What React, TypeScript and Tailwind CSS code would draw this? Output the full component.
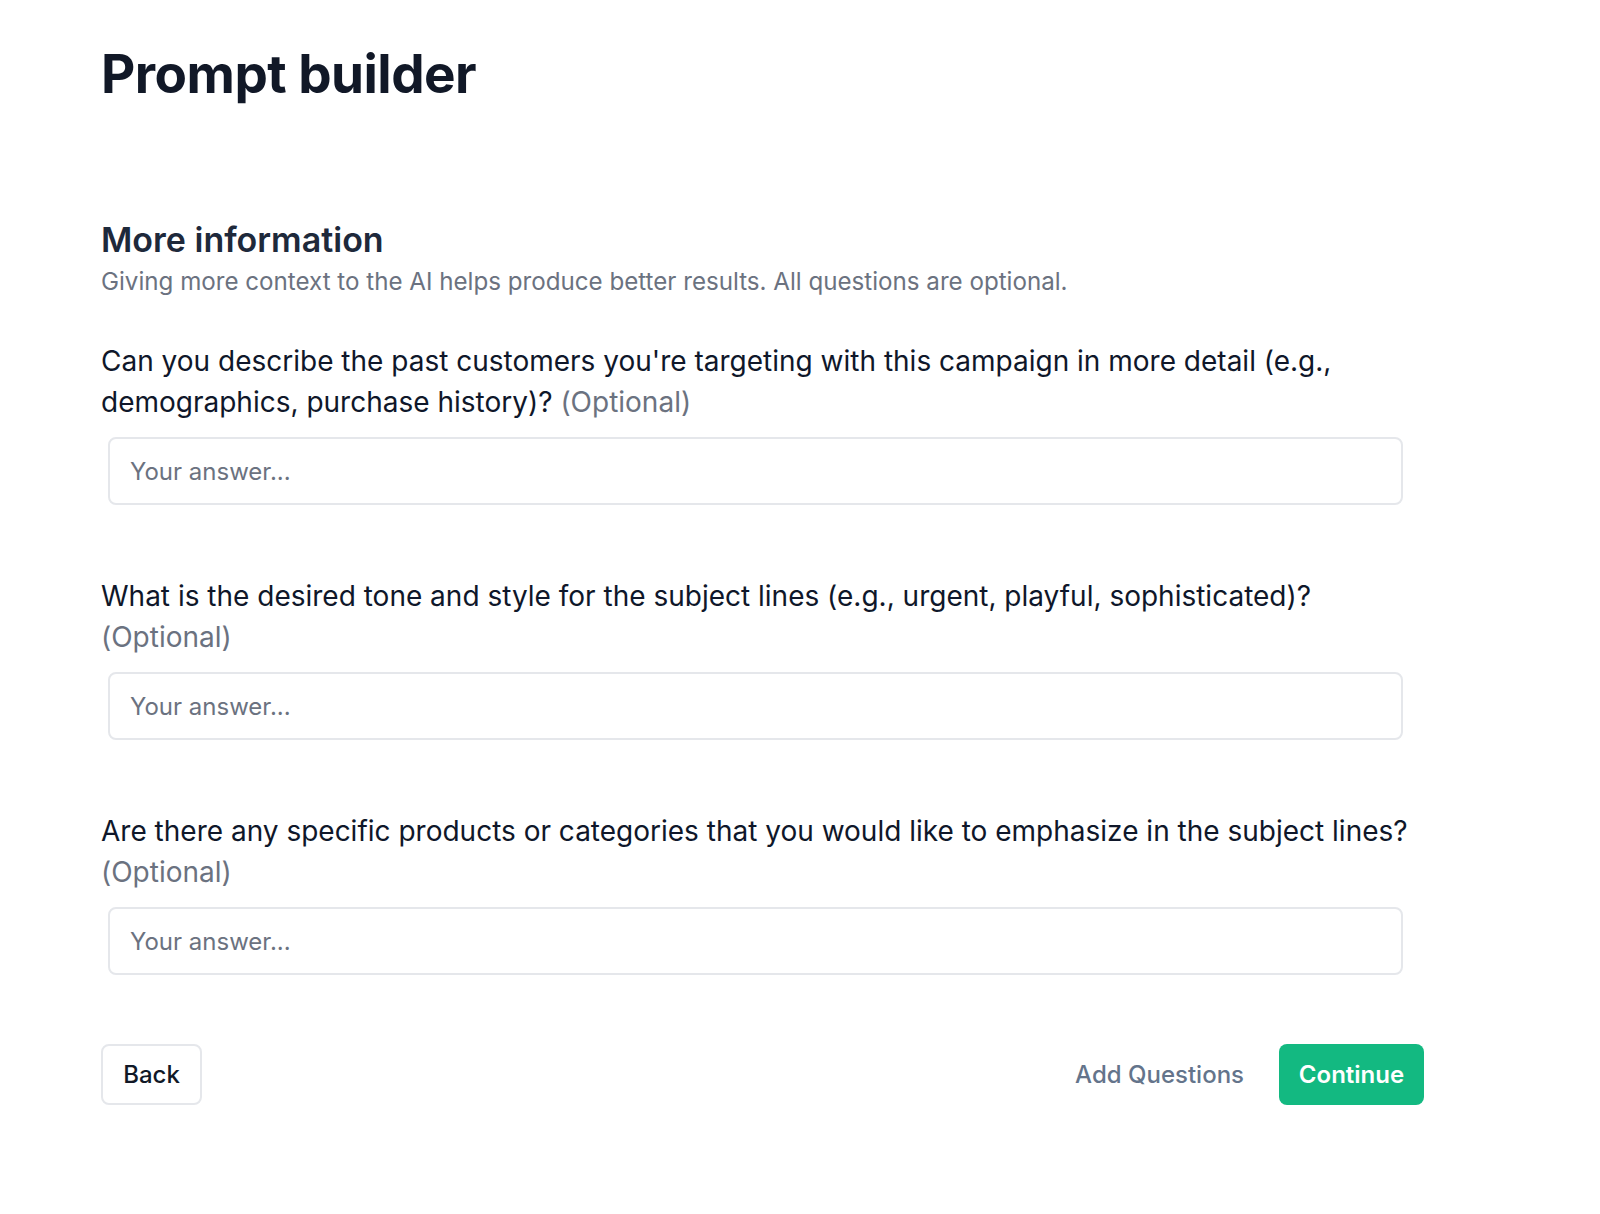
import { useState } from "react";

const questions = [
  "Can you describe the past customers you're targeting with this campaign in more detail (e.g., demographics, purchase history)?",
  "What is the desired tone and style for the subject lines (e.g., urgent, playful, sophisticated)?",
  "Are there any specific products or categories that you would like to emphasize in the subject lines?",
];

const App = () => {
  const [answers, setAnswers] = useState<string[]>(["", "", ""]);

  return (
    <div className="min-h-screen bg-white font-['Inter',sans-serif] antialiased">
      <div className="pl-[101px] pt-[38px] w-[1424px]">
        <h1 className="text-[53px] leading-[72px] font-bold text-[#111827] tracking-[-0.01em]">Prompt builder</h1>

        <div className="mt-[108px]">
          <h2 className="text-[34px] leading-[44px] font-semibold text-[#1e293b]">More information</h2>
          <p className="mt-[4px] text-[24.15px] leading-[32px] text-[#6b7280]">
            Giving more context to the AI helps produce better results. All questions are optional.
          </p>
        </div>

        <div className="mt-[43px] flex flex-col gap-[71px]">
          {questions.map((q, i) => (
            <div key={i}>
              <label className="block text-[28px] leading-[41px] text-[#0f172a]">
                {q} <span className="text-[#6b7280]">(Optional)</span>
              </label>
              <input
                className="mt-[14px] ml-[7px] block w-[1295px] h-[68px] rounded-[8px] border-2 border-[#e5e7eb] px-[20px] text-[24px] text-[#111827] placeholder:text-[#6b7280] outline-none"
                placeholder="Your answer..."
                value={answers[i]}
                onChange={e => {
                  const next = [...answers];
                  next[i] = e.target.value;
                  setAnswers(next);
                }}
              />
            </div>
          ))}
        </div>

        <div className="mt-[69px] flex items-center justify-between">
          <button className="h-[61px] w-[101px] rounded-[8px] border-2 border-[#e5e7eb] text-[24px] font-medium text-[#111827]">
            Back
          </button>
          <div className="flex items-center gap-[35px]">
            <button className="text-[24px] font-medium text-[#64748b]">Add Questions</button>
            <button className="h-[61px] w-[145px] rounded-[8px] bg-[#13b981] text-[24px] font-semibold text-white">
              Continue
            </button>
          </div>
        </div>
      </div>
    </div>
  );
};

export default App;
